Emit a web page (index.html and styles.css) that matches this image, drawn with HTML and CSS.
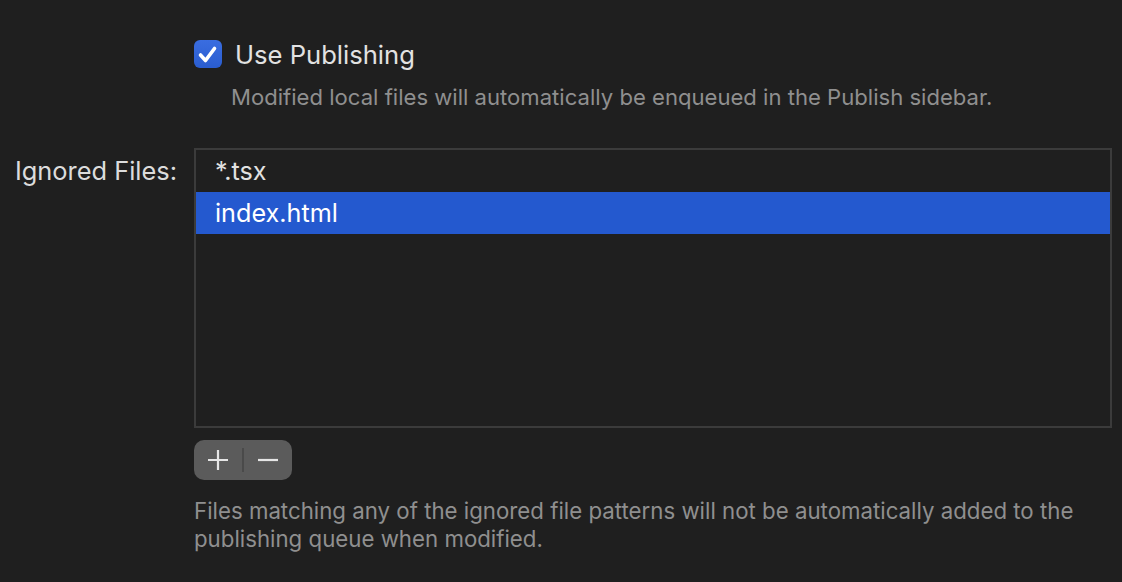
FILE: index.html
```html
<!DOCTYPE html>
<html lang="en">
<head>
<meta charset="utf-8">
<title>Publishing Preferences</title>
<link rel="stylesheet" href="styles.css">
</head>
<body>
<div class="prefs">
  <div class="label"></div>
  <div class="field">
    <label class="check-row">
      <span class="checkbox">
        <svg viewBox="0 0 28 28" width="28" height="28" aria-hidden="true">
          <path d="M6.5 15 L11.5 20.5 L20.5 8.5" fill="none" stroke="#fff" stroke-width="3.6" stroke-linecap="round" stroke-linejoin="round"/>
        </svg>
      </span>
      <span class="check-text">Use Publishing</span>
    </label>
    <p class="desc">Modified local files will automatically be enqueued in the Publish sidebar.</p>
  </div>

  <div class="label ignored">Ignored Files:</div>
  <div class="field list-field">
    <div class="list">
      <div class="row">*.tsx</div>
      <div class="row selected">index.html</div>
    </div>
    <div class="buttons">
      <span class="btn plus">
        <svg viewBox="0 0 22 22" width="22" height="22" aria-hidden="true"><path d="M11 1 V21 M1 11 H21" stroke="#e6e6e6" stroke-width="2.2"/></svg>
      </span>
      <span class="sep"></span>
      <span class="btn minus">
        <svg viewBox="0 0 22 22" width="22" height="22" aria-hidden="true"><path d="M1 11 H21" stroke="#e6e6e6" stroke-width="2.2"/></svg>
      </span>
    </div>
    <p class="note">Files matching any of the ignored file patterns will not be automatically added to the publishing queue when modified.</p>
  </div>
</div>
</body>
</html>
```

FILE: styles.css
```css
html, body {
  margin: 0;
  padding: 0;
  background: #1f1f1f;
  height: 100%;
}
body {
  font-family: Inter, "Noto Sans", sans-serif;
  color: #dedede;
  -webkit-font-smoothing: antialiased;
}
.prefs {
  display: grid;
  grid-template-columns: 194px 918px;
  align-items: start;
  padding-top: 40px;
}
.label {
  text-align: right;
  padding-right: 17px;
  font-size: 25.4px;
  color: #dcdcdc;
}
.label.ignored {
  margin-top: 39px;
  line-height: 42px;
}
.field {
  display: flex;
  flex-direction: column;
}
.list-field {
  margin-top: 37px;
}
.check-row {
  display: flex;
  align-items: center;
  gap: 13px;
  height: 28px;
}
.checkbox {
  width: 28px;
  height: 28px;
  border-radius: 6px;
  background: linear-gradient(#3a6de0, #2a5dd0);
  display: flex;
}
.check-text {
  font-size: 25.6px;
  color: #e2e2e2;
}
.desc {
  margin: 15px 0 0 37px;
  font-size: 22.1px;
  color: #8f8f8f;
  line-height: 28px;
}
.list {
  height: 276px;
  border: 2px solid #3b3b3b;
  background: #1f1f1f;
}
.row {
  height: 42px;
  line-height: 42px;
  padding-left: 19px;
  font-size: 25.2px;
  color: #e2e2e2;
}
.row.selected {
  background: #2459cf;
  color: #ffffff;
}
.buttons {
  margin-top: 12px;
  width: 98px;
  height: 40px;
  border-radius: 10px;
  background: #5b5b5b;
  display: flex;
  align-items: center;
}
.btn {
  width: 48px;
  display: flex;
  justify-content: center;
}
.sep {
  width: 2px;
  height: 24px;
  background: #4a4a4a;
}
.note {
  margin: 17px 0 0 0;
  font-size: 22.25px;
  line-height: 28px;
  color: #8f8f8f;
  width: 905px;
}
```
